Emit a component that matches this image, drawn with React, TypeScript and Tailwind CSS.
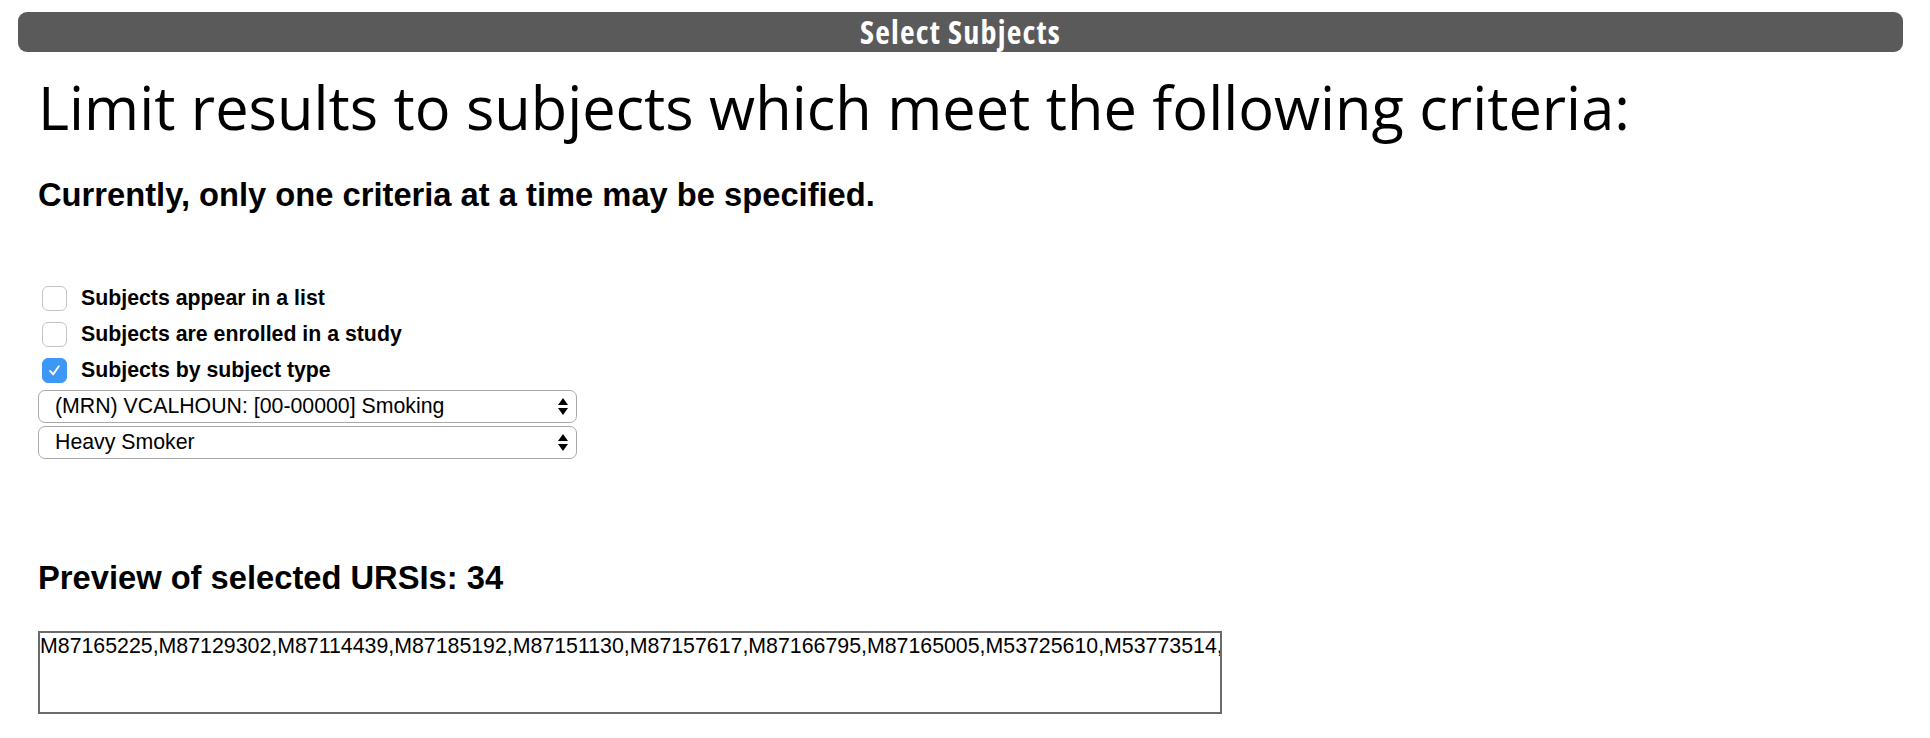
import React, { useState } from 'react';

const criteria = [
  { id: 'list', label: 'Subjects appear in a list' },
  { id: 'study', label: 'Subjects are enrolled in a study' },
  { id: 'type', label: 'Subjects by subject type' },
];

const ursis = [
  'M87165225', 'M87129302', 'M87114439', 'M87185192', 'M87151130',
  'M87157617', 'M87166795', 'M87165005', 'M53725610', 'M53773514',
];

function Checkbox({ checked, onChange }: { checked: boolean; onChange: () => void }) {
  return (
    <button
      type="button"
      onClick={onChange}
      className={`ml-[4px] w-[25px] h-[25px] rounded-[6px] flex items-center justify-center shrink-0 ${
        checked ? 'bg-[#3d97f7] border border-[#3d97f7]' : 'bg-white border border-[#c4c4c4]'
      }`}
    >
      {checked && (
        <svg width="15" height="15" viewBox="0 0 14 14">
          <path d="M3 7.5 L5.8 10.5 L11 3" fill="none" stroke="white" strokeWidth="1.8" strokeLinecap="round" strokeLinejoin="round" />
        </svg>
      )}
    </button>
  );
}

function SelectBox({ value, options }: { value: string; options: string[] }) {
  return (
    <div className="relative w-[539px] h-[33px]">
      <select
        defaultValue={value}
        className="appearance-none w-full h-full rounded-[7px] border border-[#a9a9a9] bg-white pl-[16px] pr-8 text-[21.3px] text-black outline-none"
        style={{ fontFamily: '"Liberation Sans", Arial, sans-serif' }}
      >
        {options.map((o) => (
          <option key={o}>{o}</option>
        ))}
      </select>
      <svg className="absolute right-[9px] top-[8px] pointer-events-none" width="10" height="17" viewBox="0 0 10 17">
        <path d="M5 0 L10 7 L0 7 Z" fill="black" />
        <path d="M0 10 L10 10 L5 17 Z" fill="black" />
      </svg>
    </div>
  );
}

export default function App() {
  const [selected, setSelected] = useState('type');

  return (
    <div className="min-h-screen bg-white pt-[12px] pl-[18px] pr-[27px]" style={{ fontFamily: '"Liberation Sans", Arial, sans-serif' }}>
      <div className="h-[40px] rounded-[9px] bg-[#5a5a5a] flex items-center justify-center">
        <span className="text-white text-[32px] leading-[40px] font-bold tracking-[1.2px] [font-stretch:condensed]" style={{ fontFamily: '"Open Sans", sans-serif' }}>
          Select Subjects
        </span>
      </div>

      <div className="pl-[20px]">
        <h1 className="mt-[20px] text-[59.5px] leading-[70px] text-black" style={{ fontFamily: '"Open Sans", Lato, sans-serif' }}>
          Limit results to subjects which meet the following criteria:
        </h1>
        <h2 className="mt-[34px] text-[32.7px] font-bold text-black leading-[38px]">
          Currently, only one criteria at a time may be specified.
        </h2>

        <div className="mt-[72px] flex flex-col gap-[11px]">
          {criteria.map((c) => (
            <label key={c.id} className="flex items-center gap-[14px] h-[25px] cursor-pointer">
              <Checkbox checked={selected === c.id} onChange={() => setSelected(c.id)} />
              <span className="text-[21.3px] font-bold text-black">{c.label}</span>
            </label>
          ))}
        </div>

        {selected === 'type' && (
          <div className="mt-[7px] flex flex-col gap-[3px]">
            <SelectBox value="(MRN) VCALHOUN: [00-00000] Smoking" options={['(MRN) VCALHOUN: [00-00000] Smoking']} />
            <SelectBox value="Heavy Smoker" options={['Heavy Smoker', 'Light Smoker', 'Non-Smoker']} />
          </div>
        )}

        <h3 className="mt-[100px] text-[32.7px] font-bold text-black leading-[38px]">Preview of selected URSIs: 34</h3>

        <textarea
          readOnly
          wrap="off"
          value={ursis.map((u) => u + ',').join('')}
          className="mt-[34px] block w-[1184px] h-[83px] border-2 border-[#6b6b6b] resize-none overflow-hidden px-0 py-[1px] text-[21.33px] leading-[25px] text-black outline-none"
          style={{ fontFamily: '"Liberation Sans", Arial, sans-serif' }}
        />
      </div>
    </div>
  );
}
